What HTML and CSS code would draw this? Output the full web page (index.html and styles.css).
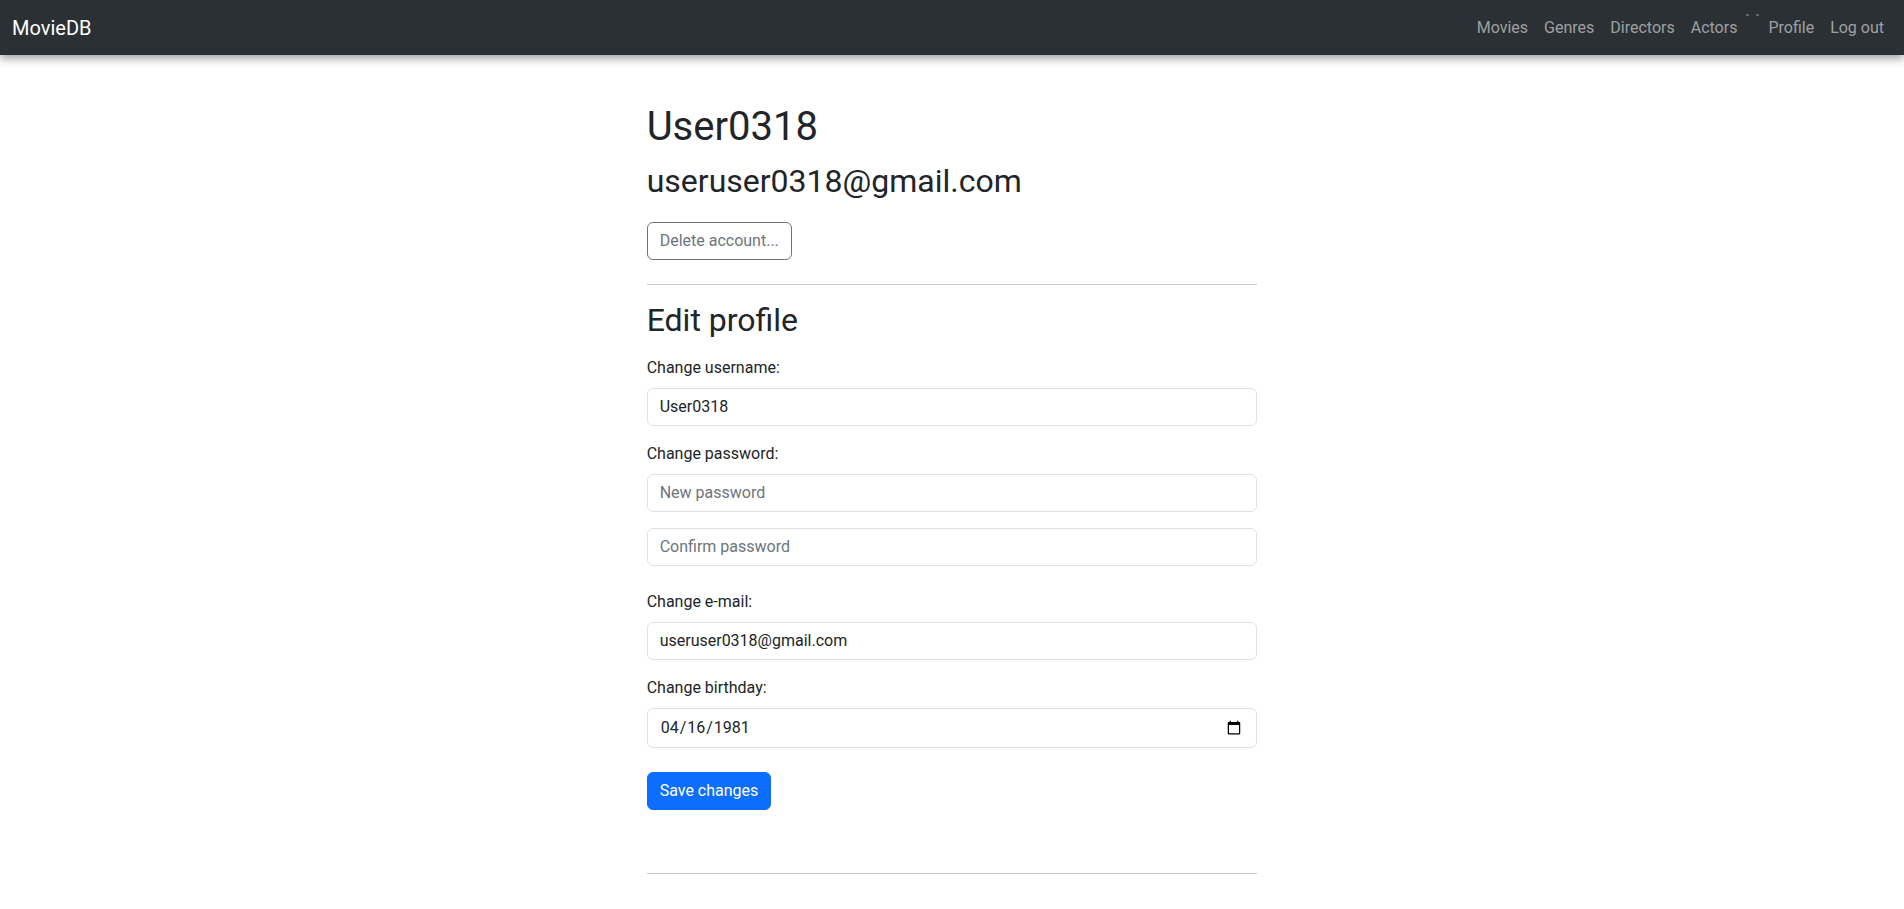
FILE: index.html
```html
<!DOCTYPE html>
<html lang="en">
<head>
<meta charset="utf-8">
<title>MovieDB - Profile</title>
<link rel="stylesheet" href="styles.css">
</head>
<body>
<nav class="navbar">
  <a class="brand" href="#">MovieDB</a>
  <ul class="nav-links">
    <li><a href="#">Movies</a></li>
    <li><a href="#">Genres</a></li>
    <li><a href="#">Directors</a></li>
    <li><a href="#">Actors</a></li>
    <li class="nav-blank"><span class="tick"></span><span class="tick"></span></li>
    <li><a href="#">Profile</a></li>
    <li><a href="#">Log out</a></li>
  </ul>
</nav>
<main class="page">
  <div class="col">
    <h1 class="username">User0318</h1>
    <h2 class="email">useruser0318@gmail.com</h2>
    <button class="btn btn-outline" type="button">Delete account...</button>
    <hr class="divider">
    <h2 class="section-title">Edit profile</h2>
    <form class="profile-form">
      <div class="field">
        <label class="form-label" for="username">Change username:</label>
        <input class="form-control" id="username" type="text" value="User0318">
      </div>
      <div class="field">
        <label class="form-label" for="pw1">Change password:</label>
        <input class="form-control" id="pw1" type="password" placeholder="New password">
      </div>
      <div class="field field-lg">
        <input class="form-control" id="pw2" type="password" placeholder="Confirm password">
      </div>
      <div class="field">
        <label class="form-label" for="email">Change e-mail:</label>
        <input class="form-control" id="email" type="email" value="useruser0318@gmail.com">
      </div>
      <div class="field field-lg">
        <label class="form-label" for="bday">Change birthday:</label>
        <input class="form-control" id="bday" type="date" value="1981-04-16">
      </div>
      <button class="btn btn-primary" type="submit">Save changes</button>
    </form>
    <hr class="divider divider-bottom">
  </div>
</main>
</body>
</html>
```
FILE: styles.css
```css
* { box-sizing: border-box; }

html, body {
  margin: 0;
  padding: 0;
  background: #fff;
}

body {
  font-family: Roboto, "Liberation Sans", sans-serif;
  font-size: 16px;
  line-height: 1.5;
  color: #212529;
}

.navbar {
  height: 55px;
  background: #2b3035;
  display: flex;
  align-items: center;
  justify-content: space-between;
  padding: 0 12px;
  box-shadow: 0 4px 8px rgba(0, 0, 0, 0.35);
  position: relative;
  z-index: 2;
}

.brand {
  color: #fff;
  text-decoration: none;
  font-size: 20px;
  line-height: 30px;
}

.nav-links {
  list-style: none;
  margin: 0;
  padding: 0;
  display: flex;
  align-items: center;
}

.nav-links a {
  display: block;
  padding: 8px;
  color: rgba(255, 255, 255, 0.55);
  text-decoration: none;
  font-size: 16px;
  line-height: 24px;
}

.nav-blank {
  width: 15px;
  height: 40px;
  display: flex;
  justify-content: space-between;
  padding: 6px 1px 0;
}

.tick {
  width: 3px;
  height: 2px;
  background: rgba(255, 255, 255, 0.25);
}

.page {
  display: flex;
  padding-top: 48px;
}

.col {
  width: 33.3333%;
  margin-left: 33.3333%;
  padding: 0 12px;
}

h1, h2, h3 {
  font-weight: 400;
  line-height: 1.2;
  margin: 0;
}

.username {
  font-size: 40px;
  margin-bottom: 11px;
}

.email {
  font-size: 32px;
  margin-bottom: 22px;
}

.btn {
  display: inline-block;
  font-family: inherit;
  font-size: 16px;
  line-height: 24px;
  padding: 6px 12px;
  border-radius: 6px;
  border: 1px solid transparent;
  cursor: pointer;
}

.btn-outline {
  background: #fff;
  color: #6c757d;
  border-color: #6c757d;
}

.btn-primary {
  background: #0d6efd;
  border-color: #0d6efd;
  color: #fff;
}

.divider {
  border: 0;
  border-top: 1px solid #c9c9c9;
  margin: 24px 0 16px;
}

.divider-bottom {
  margin-top: 63px;
}

.section-title {
  font-size: 32px;
  margin-bottom: 16px;
}

.field {
  margin-bottom: 16px;
}

.field-lg {
  margin-bottom: 24px;
}

.form-label {
  display: block;
  margin-bottom: 8px;
}

.form-control {
  display: block;
  width: 100%;
  font-family: inherit;
  font-size: 16px;
  line-height: 24px;
  padding: 6px 12px;
  color: #212529;
  background: #fff;
  border: 1px solid #dee2e6;
  border-radius: 6px;
}

.form-control::placeholder {
  color: #6c757d;
}
```
